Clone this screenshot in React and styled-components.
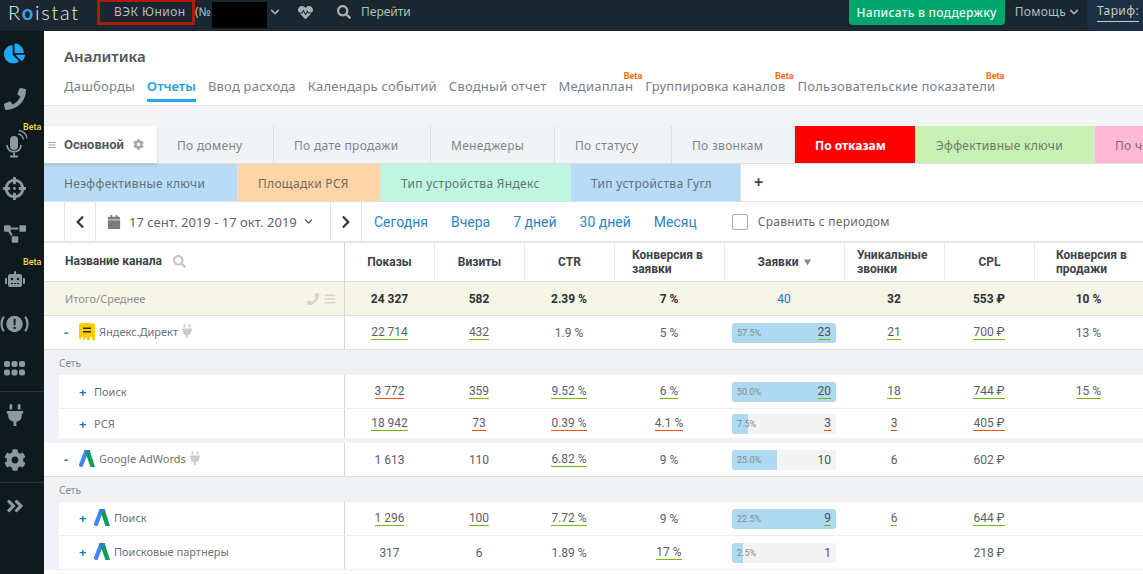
import styled, { createGlobalStyle } from "styled-components";
import {
  FaAngleDoubleRight,
  FaBars,
  FaCalendar,
  FaChartPie,
  FaChevronDown,
  FaChevronLeft,
  FaChevronRight,
  FaCog,
  FaCrosshairs,
  FaHeartbeat,
  FaPhone,
  FaPlug,
  FaProjectDiagram,
  FaRobot,
  FaSearch,
} from "react-icons/fa";

const GlobalStyle = createGlobalStyle`
  html, body {
    margin: 0;
    height: 100%;
    overflow: hidden;
    background: #fff;
    font-family: "Noto Sans", "Open Sans", sans-serif;
    color: #4a5258;
  }
`;

const Page = styled.div`
  width: 1143px;
  height: 574px;
  overflow: hidden;
  display: flex;
  flex-direction: column;
`;

/* top bar */
const TopBar = styled.header`
  height: 31px;
  flex: none;
  display: flex;
  align-items: flex-start;
  background: #1a2630;
  color: #b5bdc2;
  font-size: 12px;
`;

const Logo = styled.div`
  width: 97px;
  height: 25px;
  padding-left: 8px;
  box-sizing: border-box;
  font-family: "Lato", sans-serif;
  font-weight: 300;
  font-size: 20px;
  line-height: 24px;
  letter-spacing: 1.7px;
  color: #e8eef1;

  span {
    color: #38a8ec;
    font-weight: 700;
  }
`;

const Account = styled.div`
  width: 98px;
  height: 25px;
  box-sizing: border-box;
  border: 3px solid #ad1c0b;
  border-top-width: 2px;
  padding-left: 14px;
  line-height: 19px;
  letter-spacing: 0.45px;
  white-space: nowrap;
`;

const AccountNo = styled.div`
  width: 17px;
  line-height: 24px;
  white-space: nowrap;
`;

const Redaction = styled.div`
  width: 55px;
  height: 26px;
  margin-top: 2px;
  background: #000;
`;

const TopIcon = styled.div`
  display: flex;
  align-items: center;
  height: 24px;
  margin-left: ${(p) => p.$left}px;
  font-size: ${(p) => p.$size}px;
  color: #a7b0b5;
`;

const TopLink = styled.div`
  line-height: 24px;
  margin-left: ${(p) => p.$left}px;
  letter-spacing: ${(p) => p.$spacing || 0}px;
  white-space: nowrap;
`;

const TopSpacer = styled.div`
  flex: 1;
`;

const SupportButton = styled.button`
  width: 156px;
  height: 25px;
  padding: 0;
  border: 0;
  border-radius: 0 0 4px 4px;
  background: #00a66e;
  color: #e8fbf2;
  font-family: inherit;
  font-size: 12px;
  font-weight: 500;
  letter-spacing: 0.25px;
`;

const Tariff = styled.div`
  width: 56px;
  height: 31px;
  margin-left: 8px;
  padding-left: 10px;
  box-sizing: border-box;
  background: #1b3042;
  border-radius: 0 0 0 5px;
  color: #c5ced3;
  line-height: 22px;
  letter-spacing: 0.4px;
  white-space: nowrap;
  overflow: hidden;

  span {
    border-bottom: 1px solid #c5ced3;
    padding-bottom: 2px;
  }
`;

/* sidebar */
const Body = styled.div`
  flex: 1;
  display: flex;
  min-height: 0;
`;

const Sidebar = styled.nav`
  width: 44px;
  flex: none;
  background: #101a1e;
  color: #8a9aa3;
`;

const SideGroup = styled.div`
  border-bottom: 1px solid #2c3438;
`;

const SideItem = styled.div`
  position: relative;
  width: 29px;
  height: 45px;
  display: flex;
  align-items: center;
  justify-content: center;
  font-size: ${(p) => p.$size || 22}px;
  color: ${(p) => p.$color || "inherit"};
`;

const SideBeta = styled.span`
  position: absolute;
  top: 1px;
  left: 23px;
  font-size: 9px;
  font-weight: 500;
  color: #f0d95a;
  font-family: "Roboto", sans-serif;
`;

/* content */
const Content = styled.main`
  flex: 1;
  min-width: 0;
  overflow: hidden;
  background: #fff;
`;

const Heading = styled.section`
  height: 75px;
  box-sizing: border-box;
  padding: 15px 0 0 20px;
  border-bottom: 1px solid #e2e4e7;
`;

const Title = styled.h1`
  margin: 0;
  height: 21px;
  font-size: 15px;
  line-height: 21px;
  font-weight: 600;
  color: #50585e;
`;

const SectionNav = styled.div`
  display: flex;
  gap: 12px;
  margin-top: 10px;
`;

const NavItem = styled.a`
  position: relative;
  display: block;
  height: 25px;
  box-sizing: border-box;
  font-size: 13px;
  line-height: 19px;
  letter-spacing: ${(p) => (p.$active ? 0 : 0.22)}px;
  white-space: nowrap;
  color: ${(p) => (p.$active ? "#1f9fe6" : "#788087")};
  font-weight: ${(p) => (p.$active ? 600 : 400)};
  border-bottom: 3px solid ${(p) => (p.$active ? "#24a4ec" : "transparent")};
`;

const NavBeta = styled.span`
  position: absolute;
  top: -10px;
  right: ${(p) => p.$right}px;
  font-family: "Roboto", sans-serif;
  font-size: 9px;
  font-weight: 700;
  letter-spacing: 0;
  color: #ff6a13;
`;

const TabBand = styled.div`
  height: 20px;
  background: #f3f4f6;
`;

const TabRow = styled.div`
  display: flex;
  height: 38px;
  border-bottom: 1px solid #dde0e4;
  box-sizing: border-box;
  white-space: nowrap;
`;

const Tab = styled.div`
  flex: none;
  width: ${(p) => p.$width}px;
  display: flex;
  align-items: center;
  padding: 2px 0 0 20px;
  box-sizing: border-box;
  border-right: 1px solid #dde0e4;
  font-size: 12px;
  letter-spacing: ${(p) => (p.$bold ? 0 : 0.3)}px;
  background: ${(p) => p.$bg || "#f2f3f5"};
  color: ${(p) => p.$color || "#7c858b"};
  font-weight: ${(p) => (p.$bold ? 700 : 400)};
`;

const MainTab = styled(Tab)`
  position: relative;
  padding: 0 0 0 4px;
  background: #fff;
  color: #51595f;
  font-weight: 700;
  box-shadow: 0 2px 3px rgba(0, 0, 0, 0.14);
  border-right: 0;
  font-family: "Roboto", sans-serif;
  font-size: 13px;
  letter-spacing: 0;

  svg:first-child {
    font-size: 8px;
    color: #9ba2a7;
    margin-right: 8px;
  }

  svg:last-child {
    font-size: 11px;
    color: #a3a9ad;
    margin-left: 9px;
  }
`;

const AddTab = styled.div`
  width: 35px;
  text-align: center;
  font-size: 16px;
  line-height: 36px;
  font-weight: 700;
  color: #3e464c;
`;

const DateBar = styled.div`
  height: 41px;
  display: flex;
  align-items: stretch;
  padding-left: 20px;
  box-sizing: border-box;
  border-bottom: 2px solid #e2e4e7;
  font-size: 12px;
`;

const ArrowBox = styled.div`
  width: 31px;
  display: flex;
  align-items: center;
  justify-content: center;
  font-size: 14px;
  color: #2f373d;
  border-left: 1px solid #e2e4e7;
  box-sizing: border-box;
`;

const DateBox = styled.div`
  width: 235px;
  display: flex;
  align-items: center;
  box-sizing: border-box;
  border-left: 1px solid #e2e4e7;
  padding-left: 11px;
  font-size: 13px;
  color: #5c656b;
  white-space: nowrap;

  svg:first-child {
    color: #747d83;
    font-size: 14px;
    margin-right: 8px;
  }

  svg:last-child {
    color: #5c656b;
    font-size: 9px;
    margin-left: 7px;
  }
`;

const Presets = styled.div`
  display: flex;
  align-items: center;
  gap: 23px;
  padding-left: 12px;
  border-left: 1px solid #e2e4e7;
  font-family: "Roboto", sans-serif;
  font-size: 14px;
  color: #2c85bf;
  white-space: nowrap;
`;

const Compare = styled.label`
  display: flex;
  align-items: center;
  margin-left: 35px;
  font-size: 12px;
  letter-spacing: 0.27px;
  color: #626a70;
  white-space: nowrap;

  i {
    width: 14px;
    height: 14px;
    border: 1px solid #a8adb1;
    border-radius: 2px;
    margin-right: 10px;
  }
`;

/* table */
const COLS = "89px 90px 90px 110px 120px 100px 90px 109px";

const Row = styled.div`
  display: grid;
  grid-template-columns: ${(p) => (p.$sub ? 286 : 301)}px ${COLS};
  height: ${(p) => p.$height || 33}px;
  align-items: stretch;
  background: ${(p) => p.$bg || "#fff"};
  border-bottom: ${(p) => (p.$noline ? "0" : `1px solid ${p.$sub ? "#eceef0" : "#dcdee0"}`)};
  font-family: "Roboto", sans-serif;
  font-size: 12px;
`;

const NameCell = styled.div`
  display: flex;
  align-items: center;
  padding-left: ${(p) => p.$pad}px;
  padding-bottom: ${(p) => (p.$plain ? 0 : 2)}px;
  border-right: 1px solid #d5d7d9;
  font-family: "Noto Sans", sans-serif;
  font-size: 11px;
  color: #6a7278;
  white-space: nowrap;
`;

const HeaderName = styled(NameCell)`
  font-family: "Roboto", sans-serif;
  font-size: 12px;
  font-weight: 700;
  color: #3c444a;

  svg {
    color: #c0c5c8;
    font-size: 13px;
    margin-left: 11px;
  }
`;

const TotalName = styled(NameCell)`
  color: #8d9094;
  justify-content: space-between;
  padding-right: 8px;

  div {
    display: flex;
    gap: 5px;
    font-size: 12px;
    color: #d5d5cc;
  }
`;

const HeadCell = styled.div`
  display: flex;
  align-items: center;
  justify-content: ${(p) => (p.$wrap === undefined ? "center" : "flex-start")};
  padding-left: ${(p) => p.$wrap || 0}px;
  border-left: ${(p) => (p.$first ? "0" : "1px solid #e9ebec")};
  font-weight: 700;
  line-height: 14px;
  color: #3c444a;

  svg {
    color: #808a90;
    margin-left: 6px;
  }
`;

const Cell = styled.div`
  display: flex;
  align-items: center;
  justify-content: center;
  color: ${(p) => p.$color || (p.$bold ? "#2b3339" : "#5c5f68")};
  font-weight: ${(p) => (p.$bold ? 700 : 400)};
`;

const Metric = styled.span`
  border-bottom: ${(p) => (p.$line === "green" ? "1px solid #6cc000" : p.$line === "red" ? "1px solid #f05412" : "0")};
  line-height: 14px;
`;

const BarCell = styled.div`
  display: flex;
  align-items: center;
  justify-content: center;
`;

const Bar = styled.div`
  position: relative;
  width: 104px;
  height: 20px;
  display: flex;
  align-items: center;
  justify-content: space-between;
  box-sizing: border-box;
  padding: 0 5px;
  overflow: hidden;
  border-radius: 3px;
  background: #f3f3f4;
`;

const BarFill = styled.div`
  position: absolute;
  inset: 0 auto 0 0;
  background: #aed9f0;
`;

const BarShare = styled.span`
  position: relative;
  font-size: 9px;
  color: #848b91;
`;

const BarValue = styled(Metric)`
  position: relative;
  color: #4c5258;
`;

const SectionLabel = styled.div`
  height: 25px;
  padding-left: 15px;
  background: #f0f1f3;
  font-size: 10px;
  line-height: 26px;
  color: #868c92;
`;

const SubGroup = styled.div`
  padding-left: 15px;
  background: #eff2f6;
`;

const GroupGap = styled.div`
  height: 5px;
  background: #eff2f6;
`;

const Toggle = styled.span`
  width: ${(p) => p.$width}px;
  flex: none;
  font-size: 13px;
  font-weight: 700;
  line-height: 12px;
  color: #1380bd;
`;

const RowIcon = styled.svg`
  flex: none;
  width: 16px;
  height: 17px;
  margin-right: 4px;
`;

const PlugMark = styled(FaPlug)`
  margin: 0 0 2px 2px;
  font-size: 14px;
  color: #c9cbcd;
`;

function DirectIcon() {
  return (
    <RowIcon viewBox="0 0 16 17">
      <path d="M0 1.500 1.500 0h13L16 1.500V17h-3v-3h-2v3H8v-2H6v2H4v-3H2v2H0z" fill="#ffcc00" />
      <path d="M4 4.500h8v1.600H4zM4 8h8v1.600H4z" fill="#2b2b1a" />
    </RowIcon>
  );
}

function AdsIcon() {
  return (
    <RowIcon viewBox="0 0 16 17">
      <path d="M5.500 0 0 14.500A2 2 0 0 0 2 17h1.500L9 3z" fill="#4285f4" />
      <path d="M5.500 0h5L16 17h-4.500z" fill="#0f9d58" />
      <path d="M5.500 0h5l1 3H6.500z" fill="#2a7de1" />
    </RowIcon>
  );
}

function AlertIcon() {
  return (
    <svg width="30" height="22" viewBox="0 0 30 22" fill="none">
      <circle cx="15" cy="11" r="8.500" fill="currentColor" />
      <path d="M14 5.500h2.200l-.3 7H14.300zM14 14h2.200v2.300H14z" fill="#101a1e" />
      <path d="M4 3.500C.7 7.500.7 14.500 4 18.500M26 3.500c3.300 4 3.300 11 0 15" stroke="currentColor" strokeWidth="2.200" />
    </svg>
  );
}

function MicIcon() {
  return (
    <svg width="26" height="30" viewBox="0 0 26 30" fill="none">
      <rect x="8" y="7" width="8" height="14" rx="4" fill="currentColor" />
      <path d="M5 16c0 9 14 9 14 0M12 24v3M8 27.500h8" stroke="currentColor" strokeWidth="1.800" />
      <path d="M16 5c3 .5 5 2.500 5.500 5.500M17 1.500c4.500.7 7.500 3.700 8 8" stroke="currentColor" strokeWidth="1.300" />
    </svg>
  );
}

function GridIcon() {
  return (
    <svg width="21" height="15" viewBox="0 0 21 15" fill="currentColor">
      {[0, 7.500, 15].map((x) =>
        [0, 8.500].map((y) => <rect key={`${x}-${y}`} x={x} y={y} width="6" height="6" rx="2" />)
      )}
    </svg>
  );
}

const tabsTop = [
  { label: "По домену", width: 117 },
  { label: "По дате продажи", width: 157 },
  { label: "Менеджеры", width: 124 },
  { label: "По статусу", width: 117 },
  { label: "По звонкам", width: 123 },
  { label: "По отказам", width: 121, bg: "#ff0000", color: "#fff", bold: true },
  { label: "Эффективные ключи", width: 179, bg: "#c6f0b4", color: "#6b7a68" },
  { label: "По чекам", width: 140, bg: "#ffb9d2", color: "#7c6a72" },
];

const tabsBottom = [
  { label: "Неэффективные ключи", width: 194, bg: "#b8dcf5", color: "#5f717d" },
  { label: "Площадки РСЯ", width: 143, bg: "#fdd5a6", color: "#75695b" },
  { label: "Тип устройства Яндекс", width: 190, bg: "#c0f5e1", color: "#5d7a70" },
  { label: "Тип устройства Гугл", width: 170, bg: "#b8dcf5", color: "#5f717d" },
];

const navItems = [
  { label: "Дашборды" },
  { label: "Отчеты", active: true },
  { label: "Ввод расхода" },
  { label: "Календарь событий" },
  { label: "Сводный отчет" },
  { label: "Медиаплан", beta: -9 },
  { label: "Группировка каналов", beta: -8 },
  { label: "Пользовательские показатели", beta: -9 },
];

function Value({ value, line }) {
  return <Metric $line={line}>{value}</Metric>;
}

function MetricCells({ data }) {
  const [shows, visits, ctr, conv, bar, calls, cpl, sales] = data;
  return (
    <>
      {[shows, visits, ctr, conv].map(([v, l], i) => (
        <Cell key={i}>
          <Value value={v} line={l} />
        </Cell>
      ))}
      <BarCell>
        <Bar>
          <BarFill style={{ width: `${bar.fill}%` }} />
          <BarShare>{bar.share}</BarShare>
          <BarValue $line={bar.line}>{bar.value}</BarValue>
        </Bar>
      </BarCell>
      {[calls, cpl, sales].map(([v, l], i) => (
        <Cell key={i}>
          <Value value={v} line={l} />
        </Cell>
      ))}
    </>
  );
}

const g = "green";
const r = "red";

const direct = [["22 714", g], ["432", g], ["1.9 %"], ["5 %"], { fill: 100, share: "57.5%", value: "23", line: g }, ["21", g], ["700 ₽", g], ["13 %"]];
const directSearch = [["3 772", r], ["359", g], ["9.52 %", g], ["6 %", g], { fill: 100, share: "50.0%", value: "20", line: g }, ["18", g], ["744 ₽", g], ["15 %", g]];
const directRsya = [["18 942", g], ["73", r], ["0.39 %", r], ["4.1 %", r], { fill: 15, share: "7.5%", value: "3", line: r }, ["3", r], ["405 ₽", r], [""]];
const adwords = [["1 613"], ["110"], ["6.82 %", g], ["9 %"], { fill: 43, share: "25.0%", value: "10" }, ["6"], ["602 ₽"], [""]];
const adsSearch = [["1 296", g], ["100", g], ["7.72 %", g], ["9 %"], { fill: 100, share: "22.5%", value: "9", line: g }, ["6", g], ["644 ₽", g], [""]];
const adsPartners = [["317"], ["6"], ["1.89 %"], ["17 %", g], { fill: 11, share: "2.5%", value: "1" }, [""], ["218 ₽"], [""]];

export default function App() {
  return (
    <Page>
      <GlobalStyle />
      <TopBar>
        <Logo>
          R<span>o</span>istat
        </Logo>
        <Account>ВЭК Юнион</Account>
        <AccountNo>(№</AccountNo>
        <Redaction />
        <TopIcon $left={3} $size={10}>
          <FaChevronDown />
        </TopIcon>
        <TopIcon $left={18} $size={15}>
          <FaHeartbeat />
        </TopIcon>
        <TopIcon $left={24} $size={14}>
          <FaSearch />
        </TopIcon>
        <TopLink $left={10}>Перейти</TopLink>
        <TopSpacer />
        <SupportButton>Написать в поддержку</SupportButton>
        <TopLink $left={10} $spacing={0.3}>
          Помощь
        </TopLink>
        <TopIcon $left={3} $size={10}>
          <FaChevronDown />
        </TopIcon>
        <Tariff>
          <span>Тариф:</span>
        </Tariff>
      </TopBar>
      <Body>
        <Sidebar>
          <SideGroup>
            <SideItem $size={21} $color="#1ea7fd">
              <FaChartPie />
            </SideItem>
            <SideItem $size={22}>
              <FaPhone />
            </SideItem>
            <SideItem>
              <MicIcon />
              <SideBeta>Beta</SideBeta>
            </SideItem>
            <SideItem $size={23}>
              <FaCrosshairs />
            </SideItem>
            <SideItem $size={22}>
              <FaProjectDiagram />
            </SideItem>
            <SideItem $size={20}>
              <FaRobot />
              <SideBeta>Beta</SideBeta>
            </SideItem>
            <SideItem>
              <AlertIcon />
            </SideItem>
            <SideItem>
              <GridIcon />
            </SideItem>
          </SideGroup>
          <SideGroup>
            <SideItem $size={22}>
              <FaPlug />
            </SideItem>
            <SideItem $size={22}>
              <FaCog />
            </SideItem>
          </SideGroup>
          <SideItem $size={20}>
            <FaAngleDoubleRight />
          </SideItem>
        </Sidebar>
        <Content>
          <Heading>
            <Title>Аналитика</Title>
            <SectionNav>
              {navItems.map((item) => (
                <NavItem key={item.label} $active={item.active}>
                  {item.label}
                  {item.beta && <NavBeta $right={item.beta}>Beta</NavBeta>}
                </NavItem>
              ))}
            </SectionNav>
          </Heading>
          <TabBand />
          <TabRow>
            <MainTab $width={113} $bold>
              <FaBars />
              Основной
              <FaCog />
            </MainTab>
            {tabsTop.map((t) => (
              <Tab key={t.label} $width={t.width} $bg={t.bg} $color={t.color} $bold={t.bold}>
                {t.label}
              </Tab>
            ))}
          </TabRow>
          <TabRow>
            {tabsBottom.map((t) => (
              <Tab key={t.label} $width={t.width} $bg={t.bg} $color={t.color}>
                {t.label}
              </Tab>
            ))}
            <AddTab>+</AddTab>
          </TabRow>
          <DateBar>
            <ArrowBox>
              <FaChevronLeft />
            </ArrowBox>
            <DateBox>
              <FaCalendar />
              17 сент. 2019 - 17 окт. 2019
              <FaChevronDown />
            </DateBox>
            <ArrowBox>
              <FaChevronRight />
            </ArrowBox>
            <Presets>
              <span>Сегодня</span>
              <span>Вчера</span>
              <span>7 дней</span>
              <span>30 дней</span>
              <span>Месяц</span>
            </Presets>
            <Compare>
              <i />
              Сравнить с периодом
            </Compare>
          </DateBar>
          <Row $height={38}>
            <HeaderName $pad={21}>
              Название канала
              <FaSearch />
            </HeaderName>
            <HeadCell $first>Показы</HeadCell>
            <HeadCell>Визиты</HeadCell>
            <HeadCell>CTR</HeadCell>
            <HeadCell $wrap={17}>
              Конверсия в
              <br />
              заявки
            </HeadCell>
            <HeadCell>
              Заявки
              <svg width="7" height="7" viewBox="0 0 8 7">
                <path d="M0 0h8L4 7z" fill="currentColor" />
              </svg>
            </HeadCell>
            <HeadCell $wrap={12}>
              Уникальные
              <br />
              звонки
            </HeadCell>
            <HeadCell>CPL</HeadCell>
            <HeadCell $wrap={21}>
              Конверсия в
              <br />
              продажи
            </HeadCell>
          </Row>
          <Row $bg="#f7f5e6">
            <TotalName $pad={21} $plain>
              Итого/Среднее
              <div>
                <FaPhone />
                <FaBars />
              </div>
            </TotalName>
            <Cell $bold>24 327</Cell>
            <Cell $bold>582</Cell>
            <Cell $bold>2.39 %</Cell>
            <Cell $bold>7 %</Cell>
            <Cell $color="#1478b4">40</Cell>
            <Cell $bold>32</Cell>
            <Cell $bold>553 ₽</Cell>
            <Cell $bold>10 %</Cell>
          </Row>
          <Row>
            <NameCell $pad={20}>
              <Toggle $width={15}>-</Toggle>
              <DirectIcon />
              Яндекс.Директ
              <PlugMark />
            </NameCell>
            <MetricCells data={direct} />
          </Row>
          <SectionLabel>Сеть</SectionLabel>
          <SubGroup>
            <Row $sub>
              <NameCell $pad={20} $plain>
                <Toggle $width={15}>+</Toggle>
                Поиск
              </NameCell>
              <MetricCells data={directSearch} />
            </Row>
            <Row $sub $height={29} $noline>
              <NameCell $pad={20} $plain>
                <Toggle $width={15}>+</Toggle>
                РСЯ
              </NameCell>
              <MetricCells data={directRsya} />
            </Row>
          </SubGroup>
          <GroupGap />
          <Row>
            <NameCell $pad={20}>
              <Toggle $width={15}>-</Toggle>
              <AdsIcon />
              Google AdWords
              <PlugMark />
            </NameCell>
            <MetricCells data={adwords} />
          </Row>
          <SectionLabel>Сеть</SectionLabel>
          <SubGroup>
            <Row $sub>
              <NameCell $pad={20}>
                <Toggle $width={15}>+</Toggle>
                <AdsIcon />
                Поиск
              </NameCell>
              <MetricCells data={adsSearch} />
            </Row>
            <Row $sub>
              <NameCell $pad={20}>
                <Toggle $width={15}>+</Toggle>
                <AdsIcon />
                Поисковые партнеры
              </NameCell>
              <MetricCells data={adsPartners} />
            </Row>
          </SubGroup>
        </Content>
      </Body>
    </Page>
  );
}
